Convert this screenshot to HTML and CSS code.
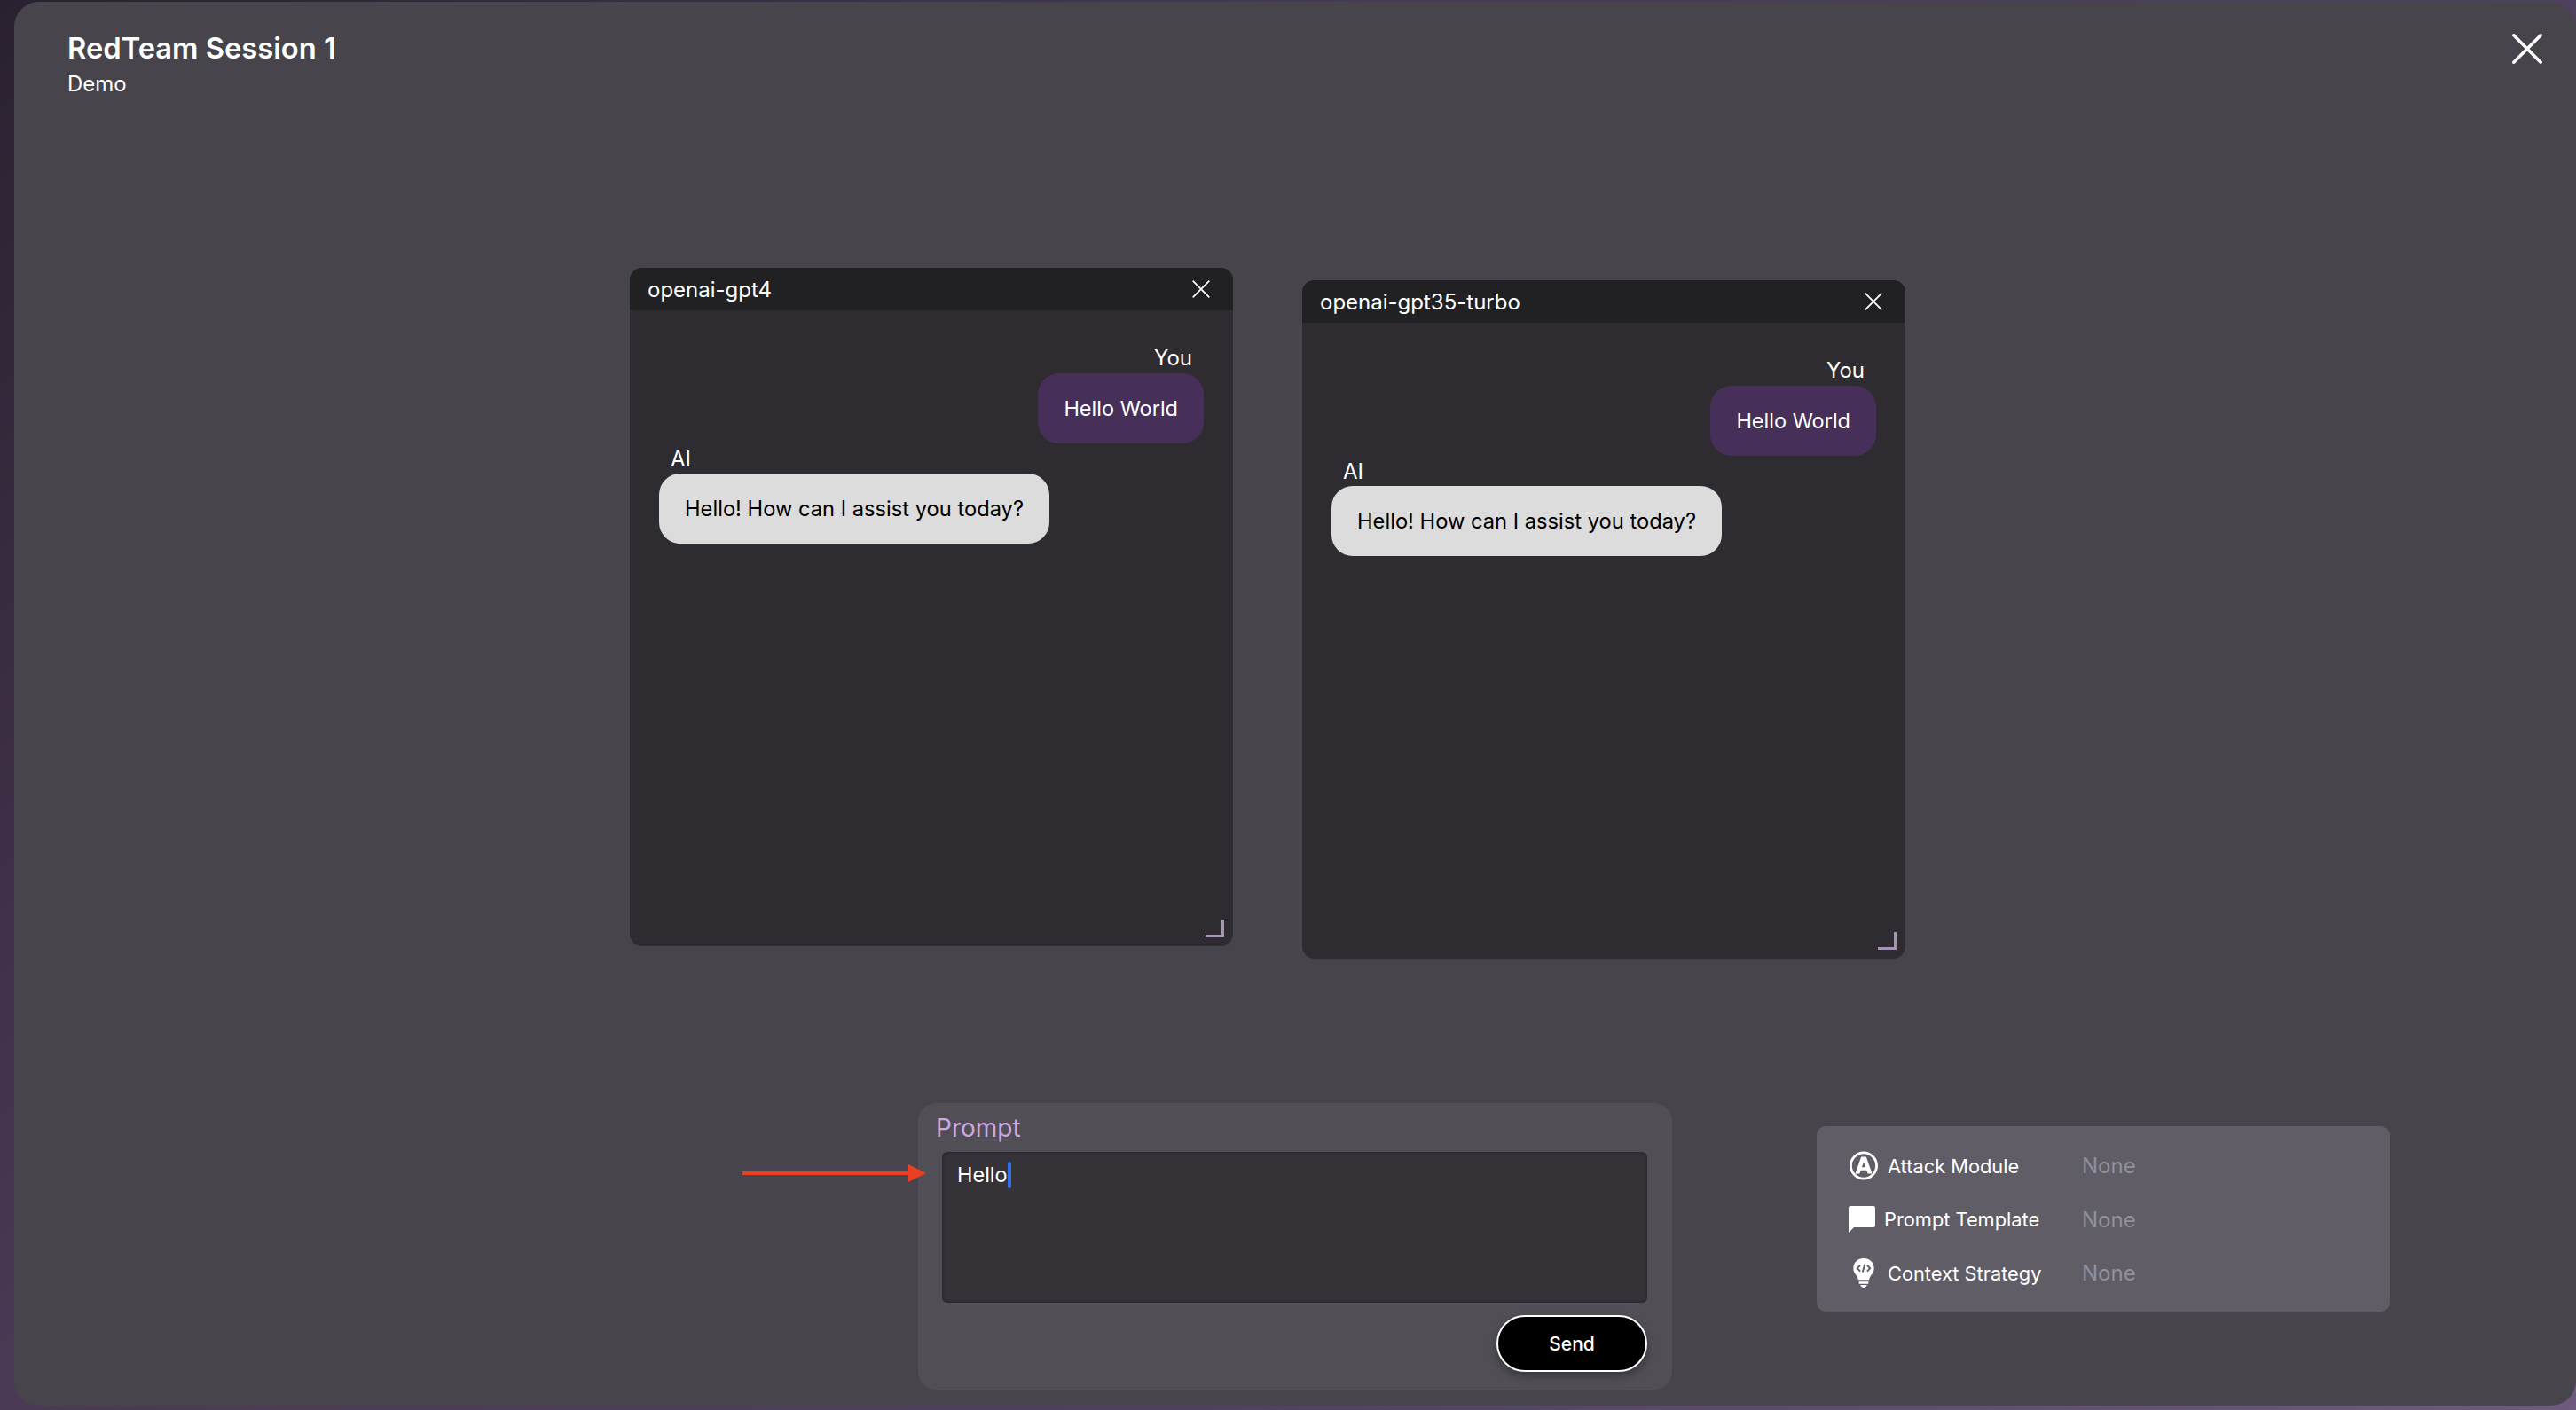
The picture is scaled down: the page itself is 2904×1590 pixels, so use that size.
FILE: index.html

```html
<!DOCTYPE html>
<html lang="en">
<head>
  <meta charset="UTF-8">
  <title>RedTeam Session 1</title>
  <link rel="stylesheet" href="styles.css">
</head>
<body>
  <div class="session">
    <header class="session-head">
      <div>
        <h1>RedTeam Session 1</h1>
        <p>Demo</p>
      </div>
      <svg class="session-close" viewBox="0 0 34 34"><path d="M1.8 1.8 L32.2 32.2 M32.2 1.8 L1.8 32.2"/></svg>
    </header>

    <div class="windows">
      <section class="chat-window">
        <div class="chat-title">
          <span>openai-gpt4</span>
          <svg viewBox="0 0 20 20"><path d="M0.7 0.7 L19.3 19.3 M19.3 0.7 L0.7 19.3"/></svg>
        </div>
        <div class="chat-body">
          <div class="who who-you">You</div>
          <div class="bubble bubble-you">Hello World</div>
          <div class="who who-ai">AI</div>
          <div class="bubble bubble-ai">Hello! How can I assist you today?</div>
        </div>
        <span class="resize-grip"></span>
      </section>

      <section class="chat-window second">
        <div class="chat-title">
          <span>openai-gpt35-turbo</span>
          <svg viewBox="0 0 20 20"><path d="M0.7 0.7 L19.3 19.3 M19.3 0.7 L0.7 19.3"/></svg>
        </div>
        <div class="chat-body">
          <div class="who who-you">You</div>
          <div class="bubble bubble-you">Hello World</div>
          <div class="who who-ai">AI</div>
          <div class="bubble bubble-ai">Hello! How can I assist you today?</div>
        </div>
        <span class="resize-grip"></span>
      </section>
    </div>

    <div class="bottom">
      <svg class="arrow" viewBox="0 0 207 20"><path d="M0 8 H187 V0 L207 10 L187 20 V12 H0 Z"/></svg>
      <section class="prompt">
        <h2>Prompt</h2>
        <div class="prompt-input"><span>Hello</span><i class="caret"></i></div>
        <div class="prompt-actions"><button class="send">Send</button></div>
      </section>

      <section class="tools">
        <div class="tool">
          <svg class="tool-icon" viewBox="0 0 32 32">
            <circle cx="16" cy="16" r="14.6" fill="none" stroke="#fff" stroke-width="2.8"/>
            <path d="M13.2 6 H18.8 L25.5 25 H20.6 L19.4 21.3 H12.6 L11.4 25 H6.5 Z M16 12 L13.9 17.8 H18.1 Z" fill-rule="evenodd"/>
          </svg>
          <span class="tool-name">Attack Module</span>
          <span class="tool-value">None</span>
        </div>
        <div class="tool tool-tight">
          <svg class="tool-icon" viewBox="0 0 30 30"><path d="M2 0 H28 Q30 0 30 2 V22 Q30 24 28 24 H6 L0 30 V2 Q0 0 2 0 Z"/></svg>
          <span class="tool-name">Prompt Template</span>
          <span class="tool-value">None</span>
        </div>
        <div class="tool">
          <svg class="tool-icon" viewBox="0 0 32 34">
            <path d="M16 0 C7.5 0 4 6.2 4 11.5 C4 16 6.5 18.2 8 20.5 C9.2 22.3 9.5 24 9.8 25 H22.2 C22.5 24 22.8 22.3 24 20.5 C25.5 18.2 28 16 28 11.5 C28 6.2 24.5 0 16 0 Z"/>
            <path d="M10.5 27 H21.5 V29.5 H10.5 Z M12 31 H20 C19 33 17.5 34 16 34 C14.5 34 13 33 12 31 Z"/>
            <path class="bulb-code" d="M12 8 L8.6 11.5 L12 15 M20 8 L23.4 11.5 L20 15 M17.3 7 L14.7 16"/>
          </svg>
          <span class="tool-name">Context Strategy</span>
          <span class="tool-value">None</span>
        </div>
      </section>
    </div>
  </div>
</body>
</html>
```

FILE: styles.css

```css
* {
  box-sizing: border-box;
}
html, body {
  height: 100%;
}
body {
  margin: 0;
  padding: 2px 0 5px 16px;
  overflow: hidden;
  font-family: Inter, "Noto Sans", sans-serif;
  color: #fff;
  background: linear-gradient(135deg, #2a2130 0%, #4a3a55 35%, #4f4060 65%, #6e5a7c 100%);
}
.session {
  height: 100%;
  display: flex;
  flex-direction: column;
  background-color: #47444b;
  border-radius: 28px;
  padding-left: 60px;
}

/* header */
.session-head {
  display: flex;
  justify-content: space-between;
  align-items: flex-start;
  height: 120px;
  padding-top: 32px;
  padding-right: 38px;
}
.session-head h1 {
  margin: 0;
  font-size: 32.7px;
  line-height: 40px;
  font-weight: 600;
}
.session-head p {
  margin: 6px 0 0;
  font-size: 24px;
  line-height: 30px;
}
.session-close {
  width: 34px;
  height: 34px;
  margin-top: 4px;
}
.session-close path {
  fill: none;
  stroke: #fff;
  stroke-width: 3.5;
  stroke-linecap: round;
}

/* chat windows */
.windows {
  display: flex;
  align-items: flex-start;
  gap: 78px;
  padding-left: 634px;
  padding-top: 180px;
  height: 1122px;
}
.chat-window {
  position: relative;
  width: 680px;
  height: 765px;
  background-color: #2e2c31;
  border-radius: 14px;
  overflow: hidden;
}
.chat-window.second {
  margin-top: 14px;
}
.chat-title {
  display: flex;
  justify-content: space-between;
  align-items: center;
  height: 48px;
  padding: 0 26px 0 20px;
  background-color: #212123;
  font-size: 24px;
}
.chat-title svg {
  width: 20px;
  height: 20px;
}
.chat-title path {
  fill: none;
  stroke: #fff;
  stroke-width: 1.8;
}
.chat-body {
  display: flex;
  flex-direction: column;
  padding: 39px 33px 0;
  font-size: 24px;
}
.who {
  line-height: 30px;
}
.who-you {
  align-self: flex-end;
  margin-right: 13px;
}
.who-ai {
  margin: 3px 0 0 13px;
}
.bubble {
  height: 79px;
  line-height: 79px;
  border-radius: 24px;
  padding: 0 29px;
  font-size: 23.7px;
}
.bubble-you {
  align-self: flex-end;
  background-color: #46305a;
  margin-top: 2px;
  font-size: 23.5px;
}
.bubble-ai {
  align-self: flex-start;
  background-color: #dcdcdc;
  color: #000;
  margin-top: 1px;
}
.resize-grip {
  position: absolute;
  right: 10px;
  bottom: 10px;
  width: 21px;
  height: 20px;
  border-right: 3px solid #a795b5;
  border-bottom: 3px solid #a795b5;
}

/* prompt + tools */
.bottom {
  display: flex;
  align-items: flex-start;
  padding-left: 959px;
  position: relative;
}
.arrow {
  position: absolute;
  left: 761px;
  top: 69px;
  width: 207px;
  height: 20px;
  fill: #ea3f22;
  z-index: 1;
}
.prompt {
  width: 850px;
  height: 323px;
  padding: 10px 28px 0 20px;
  background-color: #514e56;
  border-radius: 20px;
}
.prompt h2 {
  margin: 0;
  font-size: 28px;
  line-height: 36px;
  font-weight: 400;
  color: #cba8e0;
}
.prompt-input {
  display: flex;
  align-items: flex-start;
  height: 170px;
  margin: 9px 0 0 7px;
  padding: 11px 17px;
  background-color: #353238;
  border-radius: 6px;
  box-shadow: inset 0 0 4px rgba(0, 0, 0, 0.35);
  font-size: 23.5px;
  line-height: 30px;
}
.caret {
  width: 4px;
  height: 30px;
  background-color: #2f6fe8;
  border-radius: 2px;
}
.prompt-actions {
  display: flex;
  justify-content: flex-end;
  margin-top: 14px;
}
.send {
  width: 170px;
  height: 64px;
  border: 2px solid #fff;
  border-radius: 32px;
  background-color: #000;
  color: #fff;
  font: 500 21px Inter, sans-serif;
  box-shadow: 0 5px 10px rgba(0, 0, 0, 0.3);
}
.tools {
  width: 646px;
  height: 209px;
  margin: 26px 0 0 163px;
  padding: 28px 0 0 37px;
  display: flex;
  flex-direction: column;
  gap: 27.5px;
  background-color: #605d66;
  border-radius: 10px;
  font-size: 21.8px;
}
.tool {
  display: flex;
  align-items: center;
  height: 33px;
}
.tool-icon {
  width: 32px;
  height: 33px;
  fill: #fff;
  margin-right: 11px;
  flex-shrink: 0;
}
.tool-tight .tool-icon {
  width: 30px;
  height: 30px;
  margin: 0 10px 0 -1px;
}
.tool-name {
  width: 219px;
}
.tool-tight .tool-name {
  width: 223px;
}
.tool-value {
  font-size: 24px;
  color: #92909a;
}
.bulb-code {
  fill: none;
  stroke: #605d66;
  stroke-width: 2;
}
```
